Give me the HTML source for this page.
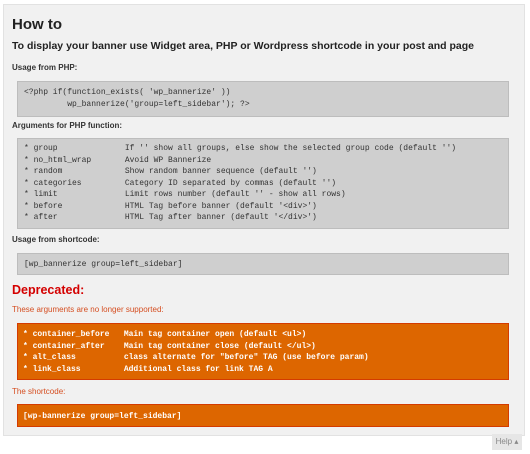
<!DOCTYPE html>
<html><head><style>
body{margin:0;width:530px;height:454px;background:#fff;font-family:"Liberation Sans",Arial,sans-serif;position:relative;overflow:hidden}
.panel{position:absolute;left:3px;top:4px;width:520px;height:430px;background:#f1f1f1;border:1px solid #e2e2e2}
.t{position:absolute;left:12px;white-space:nowrap}
.box{position:absolute;left:17px;width:492px;background:#cfcfcf;border:1px solid #bdbdbd;font-family:"Liberation Mono",monospace;font-size:8px;color:#333;white-space:pre;line-height:11.5px;padding:0 6px;box-sizing:border-box}
.or{background:#dd6600;border:1px solid #d43b00;color:#fff;font-weight:bold}
.help{position:absolute;left:492px;top:434px;width:30px;height:16px;background:#e6e6e6;font-size:8px;color:#888;line-height:16px;text-align:center}
</style></head><body>
<div class="panel"></div>
<div class="t" style="top:16px;font-size:15px;font-weight:bold;color:#222">How to</div>
<div class="t" style="top:40px;font-size:10.5px;font-weight:bold;color:#222">To display your banner use Widget area, PHP or Wordpress shortcode in your post and page</div>
<div class="t" style="top:63px;font-size:8px;font-weight:bold;color:#333">Usage from PHP:</div>
<div class="box" style="top:81px;height:36px;padding-top:5px">&lt;?php if(function_exists( 'wp_bannerize' ))
         wp_bannerize('group=left_sidebar'); ?&gt;</div>
<div class="t" style="top:121px;font-size:8px;font-weight:bold;color:#333">Arguments for PHP function:</div>
<div class="box" style="top:138px;height:91px;padding-top:4px">* group              If '' show all groups, else show the selected group code (default '')
* no_html_wrap       Avoid WP Bannerize
* random             Show random banner sequence (default '')
* categories         Category ID separated by commas (default '')
* limit              Limit rows number (default '' - show all rows)
* before             HTML Tag before banner (default '&lt;div&gt;')
* after              HTML Tag after banner (default '&lt;/div&gt;')</div>
<div class="t" style="top:235px;font-size:8px;font-weight:bold;color:#333">Usage from shortcode:</div>
<div class="box" style="top:253px;height:22px;padding-top:5px">[wp_bannerize group=left_sidebar]</div>
<div class="t" style="top:283px;font-size:12.5px;font-weight:bold;color:#d40000">Deprecated:</div>
<div class="t" style="top:305px;font-size:8px;color:#d54e21">These arguments are no longer supported:</div>
<div class="box or" style="top:323px;height:57px;padding-top:5px;padding-left:5px">* container_before   Main tag container open (default &lt;ul&gt;)
* container_after    Main tag container close (default &lt;/ul&gt;)
* alt_class          class alternate for "before" TAG (use before param)
* link_class         Additional class for link TAG A</div>
<div class="t" style="top:387px;font-size:8px;color:#d54e21">The shortcode:</div>
<div class="box or" style="top:404px;height:23px;padding-top:6px;padding-left:5px">[wp-bannerize group=left_sidebar]</div>
<div class="help">Help ▴</div>
</body></html>
